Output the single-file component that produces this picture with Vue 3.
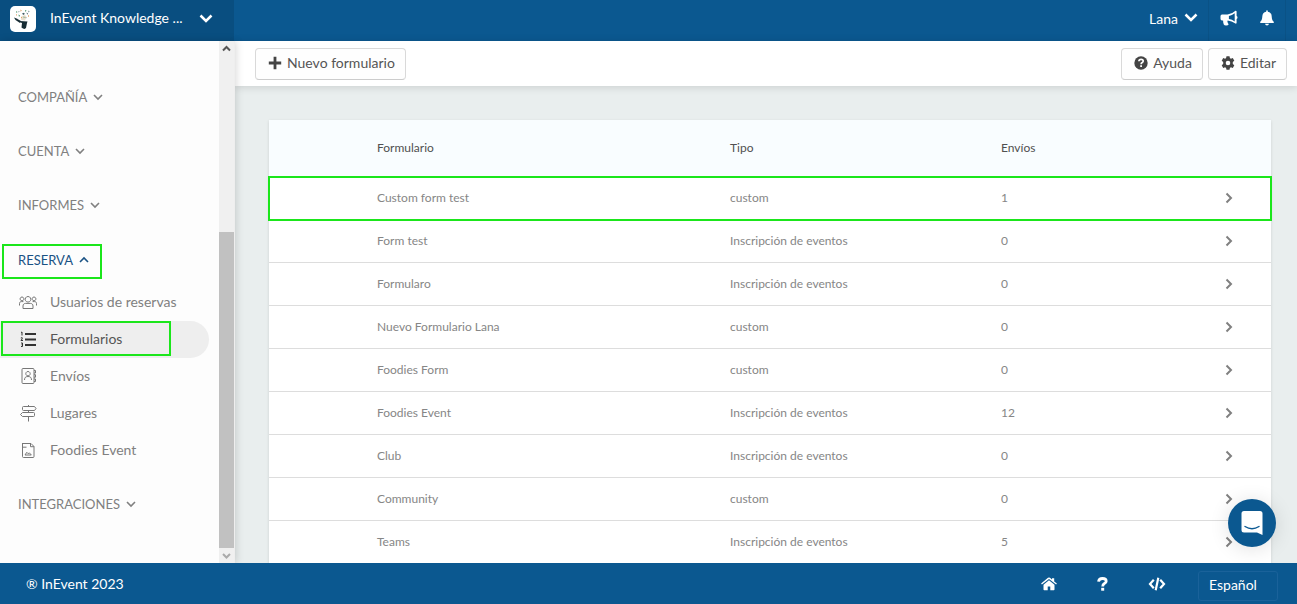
<script setup>
import { ref } from 'vue'

const language = ref('es')

const groups = [
  { title: 'COMPAÑÍA' },
  { title: 'CUENTA' },
  { title: 'INFORMES' },
  {
    title: 'RESERVA',
    open: true,
    items: [
      { label: 'Usuarios de reservas', icon: 'users' },
      { label: 'Formularios', icon: 'list', active: true },
      { label: 'Envíos', icon: 'contact' },
      { label: 'Lugares', icon: 'sign' },
      { label: 'Foodies Event', icon: 'file' },
    ],
  },
  { title: 'INTEGRACIONES' },
]

const rows = [
  { name: 'Custom form test', type: 'custom', count: 1, marked: true },
  { name: 'Form test', type: 'Inscripción de eventos', count: 0 },
  { name: 'Formularo', type: 'Inscripción de eventos', count: 0 },
  { name: 'Nuevo Formulario Lana', type: 'custom', count: 0 },
  { name: 'Foodies Form', type: 'custom', count: 0 },
  { name: 'Foodies Event', type: 'Inscripción de eventos', count: 12 },
  { name: 'Club', type: 'Inscripción de eventos', count: 0 },
  { name: 'Community', type: 'custom', count: 0 },
  { name: 'Teams', type: 'Inscripción de eventos', count: 5 },
]

const icons = {
  users:
    'M9 3.500a2.800 2.800 0 1 0 .01 0M3 4a1.900 1.900 0 1 0 .01 0M15 4a1.900 1.900 0 1 0 .01 0M4 15.500v-2.500c0-1.800 1.200-2.600 2.600-2.600h4.800c1.400 0 2.600.8 2.600 2.600v2.500zM.5 12.500v-2c0-1.200.7-1.900 1.900-1.900h2M17.500 12.500v-2c0-1.200-.7-1.900-1.900-1.900h-2',
  contact:
    'M4 1.500h10q1 0 1 1v13q0 1-1 1H4q-1 0-1-1v-13q0-1 1-1zM9 4.500a2.200 2.200 0 1 0 .01 0M5.500 13c0-2.500 1.200-3.500 3.500-3.500s3.500 1 3.500 3.500M15 3.500h1.500V6H15M15 7.700h1.500v2.500H15M15 12h1.500v2.500H15',
  sign:
    'M4.500 2.500H15.500l1.500 2L15.500 6.500H4.500q-1 0-1-1v-2q0-1 1-1zM14.500 8.500H3.500l-2 2 2 2h11q1 0 1-1v-2q0-1-1-1zM9.500 1v1.500M9.500 6.500v2M9.500 12.500V17.500',
  file:
    'M3.500 2.500h8.500l3 3V15.500q0 1-1 1H4.500q-1 0-1-1V2M11.500 2.500v3.200h3.500M3.500 6.200h4M6 14l1.800-2.700 1.500 1.500 1-1 2 2.200z',
}
</script>

<template>
  <div class="app">
    <header class="top">
      <button class="brand" type="button">
        <svg class="logo" viewBox="0 0 26 26" aria-hidden="true">
          <rect width="26" height="26" rx="5" fill="#fff" />
          <path d="M10 15l7.500.5-.5 1.500-1 5-1.500 1-1.500-.5-1.500-1 .5-4.500-2-.7z" fill="#172c34" />
          <path d="M4 11.500l2.500 1 4.500 2.500-1 2-4.500-3z" fill="#172c34" />
          <path d="M11 14l1-4 3-1 1.500 2-1.500 3.500z" fill="#eadfce" />
          <path d="M6 5l1.500 1-1 1zM8.500 8.500l1.500 1-1 1.500zM15 4l1.500.5-1 1.500zM13.500 10.500l1.200.5-.8 1.200z" fill="#3e8d61" />
          <path d="M10.500 3.500l1.200 1-1 1.200zM18 9l1.200 1-1.200 1zM6 8l1 1-1 .7zM11 10.500l1 1-1 1z" fill="#d9863d" />
          <path d="M12 7.500l2-.8.800 1.300-1.500 1zM16.500 6.500l1.500 1-.8 1.200zM18.500 4.500l1 1-1 1zM8.500 5l1 .5-.7 1zM15.500 11l1 .5-.5 1z" fill="#455e67" />
        </svg>
        <span class="brand-name">InEvent Knowledge ...</span>
        <svg class="chev-top" viewBox="0 0 14 10" aria-hidden="true"><path d="M1.500 1.500 7 7l5.500-5.500" /></svg>
      </button>
      <nav class="top-nav" aria-label="Usuario">
        <button class="user" type="button">
          Lana
          <svg class="chev-top" viewBox="0 0 14 10" aria-hidden="true"><path d="M1.500 1.500 7 7l5.500-5.500" /></svg>
        </button>
        <div class="top-icons">
          <button type="button" aria-label="Anuncios">
            <svg width="18" height="16" viewBox="0 0 18 16" fill="#fff" aria-hidden="true">
              <path fill-rule="evenodd" d="M15.500.8q1-.2 1.100.8v4.300q.9.400.9 1.500t-.9 1.500v3.900q-.1 1-1.100.8-3.900-3-7.800-3.200-.6.700-.1 1.900.1 1 1.100 1.900-.6 1.400-2.700 1.300-1.700-.1-2.200-.9-.8-2.400-.7-4.200H2Q.5 10.300.5 8.800V6.100Q.6 4.600 2 4.500h5.500Q12 4.200 15.500.8zM14.700 3.300Q12 5.600 8.900 6v2.900q3.100.3 5.800 2.600z" />
            </svg>
          </button>
          <button type="button" aria-label="Notificaciones">
            <svg width="14" height="16" viewBox="0 0 14 16" fill="#fff" aria-hidden="true">
              <path d="M6.200 1.700V1q0-.8.800-.8t.8.800v.7c2.500.4 3.800 2.200 3.900 4.700.1 2.800.8 4.300 2.100 5.400.2 1-.3 1.200-.9 1.200H1.100c-.6 0-1.100-.2-.9-1.200 1.300-1.100 2-2.600 2.100-5.400.1-2.500 1.400-4.300 3.900-4.700zM5 13.700h4q-.3 1.700-2 1.700t-2-1.700z" />
            </svg>
          </button>
        </div>
      </nav>
    </header>

    <div class="body">
      <aside class="side">
        <nav class="menu" aria-label="Principal">
          <section v-for="g in groups" :key="g.title" class="group">
            <button type="button" class="group-title" :class="{ open: g.open }" :aria-expanded="!!g.open">
              {{ g.title }}
              <svg class="chev-side" viewBox="0 0 10 8" aria-hidden="true">
                <path :d="g.open ? 'M1 6l4-4 4 4' : 'M1 2l4 4 4-4'" />
              </svg>
            </button>
            <ul v-if="g.items" class="items">
              <li v-for="item in g.items" :key="item.label">
                <a href="#" :class="{ active: item.active }">
                  <svg v-if="item.icon === 'list'" class="item-icon" viewBox="0 0 18 18" aria-hidden="true">
                    <path class="thick" d="M6 4h11M6 9.500h11M6 15h11" />
                    <path class="thin" d="M2 2.500l1-.5v3.500M1.800 8q2-1 1.500.7L2 10.500h2M2 13h1.500v3.500H2M2.500 14.800h1" />
                  </svg>
                  <svg v-else class="item-icon" viewBox="0 0 18 18" aria-hidden="true">
                    <path :d="icons[item.icon]" />
                  </svg>
                  {{ item.label }}
                </a>
              </li>
            </ul>
          </section>
        </nav>
        <div class="scroll" aria-hidden="true">
          <svg class="arrow up" viewBox="0 0 15 15"><path d="M4 9.500 7.500 6 11 9.500" /></svg>
          <div class="thumb"></div>
          <svg class="arrow down" viewBox="0 0 15 15"><path d="M4 6l3.500 3.500L11 6" /></svg>
        </div>
      </aside>

      <main class="main">
        <div class="toolbar">
          <button type="button" class="btn">
            <svg width="14" height="14" viewBox="0 0 14 14" aria-hidden="true">
              <path d="M5.600.800h2.800v4.800h4.800v2.800H8.400v4.800H5.600V8.400H.800V5.600h4.800z" fill="#444" />
            </svg>
            Nuevo formulario
          </button>
          <div class="actions">
            <button type="button" class="btn">
              <svg width="14" height="14" viewBox="0 0 14 14" aria-hidden="true">
                <circle cx="7" cy="7" r="6.700" fill="#444" />
                <path d="M4.900 5.300Q5 3.400 7.100 3.400t2.100 1.700q0 .9-1 1.500Q7.100 7.200 7.100 8.200" fill="none" stroke="#fff" stroke-width="1.700" />
                <path d="M6.200 9.200h1.800v1.700H6.200z" fill="#fff" />
              </svg>
              Ayuda
            </button>
            <button type="button" class="btn">
              <svg width="14" height="14" viewBox="0 0 14 14" aria-hidden="true">
                <path fill-rule="evenodd" fill="#444" d="M5.500.2h3l.4 1.900 1 .6 1.900-.6 1.500 2.600-1.500 1.300v2l1.500 1.300-1.500 2.600-1.900-.6-1 .6-.4 1.900h-3l-.4-1.900-1-.6-1.900.6L.7 9.300l1.500-1.300V6L.7 4.700l1.500-2.600 1.900.6 1-.6zM7 4.700a2.300 2.300 0 1 0 0 4.600 2.300 2.300 0 0 0 0-4.600z" />
              </svg>
              Editar
            </button>
          </div>
        </div>

        <div class="content">
          <table class="forms">
            <colgroup>
              <col class="c-lead" />
              <col class="c-name" />
              <col class="c-type" />
              <col class="c-count" />
              <col class="c-go" />
            </colgroup>
            <thead>
              <tr>
                <td></td>
                <th scope="col">Formulario</th>
                <th scope="col">Tipo</th>
                <th scope="col">Envíos</th>
                <td></td>
              </tr>
            </thead>
            <tbody>
              <tr v-for="r in rows" :key="r.name" :class="{ marked: r.marked }">
                <td></td>
                <td>{{ r.name }}</td>
                <td>{{ r.type }}</td>
                <td>{{ r.count }}</td>
                <td>
                  <svg class="go" viewBox="0 0 8 12" aria-hidden="true"><path d="M1.500 1.500 6 6l-4.500 4.500" /></svg>
                </td>
              </tr>
            </tbody>
          </table>
        </div>
      </main>
    </div>

    <footer class="foot">
      <span class="copy">® InEvent 2023</span>
      <nav class="foot-nav" aria-label="Pie">
        <a href="#" aria-label="Inicio">
          <svg width="16" height="14" viewBox="0 0 16 14" fill="#fff" aria-hidden="true">
            <path d="M8 3.200 13.500 7.800v4.700q0 .7-.7.7H9.300V9.500H6.700v3.700H3.200q-.7 0-.7-.7V7.800z" />
            <path d="M8 .5q.6 0 1 .3l2 1.700V1.200h2.200v3.200L15.900 6.600l-.8 1L8 1.900.9 7.600l-.8-1L7 .8q.4-.3 1-.3z" />
          </svg>
        </a>
        <a href="#" aria-label="Ayuda">
          <svg width="11" height="14" viewBox="0 0 11 14" aria-hidden="true">
            <path d="M1.500 4.600Q2 1.500 5.500 1.500q3.700 0 3.700 2.700 0 1.500-1.800 2.400Q5.700 7.500 5.700 9.400" fill="none" stroke="#fff" stroke-width="2.800" />
            <path d="M4.200 10.800h3v2.900h-3z" fill="#fff" />
          </svg>
        </a>
        <a href="#" aria-label="Desarrolladores">
          <svg width="18" height="14" viewBox="0 0 18 14" fill="none" stroke="#fff" stroke-width="2.200" aria-hidden="true">
            <path d="M5.800 2.800 2 7l3.800 4.200M12.200 2.800 16 7l-3.800 4.200M10.300.8 7.700 13.200" />
          </svg>
        </a>
        <select v-model="language" class="lang" aria-label="Idioma">
          <option value="es">Español</option>
        </select>
      </nav>
    </footer>

    <button type="button" class="chat" aria-label="Chat">
      <svg width="24" height="26" viewBox="0 0 24 26" aria-hidden="true">
        <path d="M4 1h16q2.500 0 2.500 2.500V25l-5.500-2.500H4Q1.500 22.500 1.500 20V3.500Q1.500 1 4 1z" fill="#fff" />
        <path d="M5 16.500q7 4.500 14 0" fill="none" stroke="#0c5a93" stroke-width="1.400" stroke-linecap="round" />
      </svg>
    </button>
  </div>
</template>

<style>
body {
  overflow: hidden;
}
</style>

<style scoped>
.app {
  display: flex;
  flex-direction: column;
  height: 100vh;
  font-family: Lato, 'Liberation Sans', sans-serif;
  font-size: 14px;
  color: #808080;
  background: #e9eeee;
}
.app * {
  box-sizing: border-box;
}
button,
select {
  font: inherit;
  color: inherit;
  background: none;
  border: 0;
  padding: 0;
  margin: 0;
}
a {
  color: inherit;
  text-decoration: none;
}
svg {
  display: block;
  flex: none;
}
.top {
  display: flex;
  justify-content: space-between;
  flex: none;
  height: 41px;
  background: #0b5890;
  color: #fff;
}
.brand {
  display: flex;
  align-items: center;
  width: 234px;
  padding: 0 10px 4px;
  background: #094e80;
}
.logo {
  width: 26px;
  height: 26px;
}
.brand-name {
  margin: 0 16px 2px 14px;
  white-space: nowrap;
}
.chev-top {
  width: 14px;
  height: 10px;
  fill: none;
  stroke: #fff;
  stroke-width: 2.500;
}
.top-nav {
  display: flex;
  padding-right: 11px;
}
.user {
  display: flex;
  align-items: center;
  gap: 6px;
  padding: 0 10px 5px 0;
}
.top-icons {
  display: flex;
  align-items: center;
  gap: 22px;
  padding: 0 11px 6px 11px;
  border-left: 1px solid #0a5286;
  border-right: 1px solid #0a5286;
}
.body {
  display: flex;
  flex: 1;
  min-height: 0;
}
.side {
  position: relative;
  z-index: 1;
  display: flex;
  flex: none;
  width: 235px;
  background: #fdfdfd;
  border-right: 1px solid #eee;
  box-shadow: 1px 0 8px rgba(0, 0, 0, 0.16);
}
.menu {
  display: flex;
  flex: 1;
  flex-direction: column;
  gap: 16px;
  padding: 37px 10px 0 2px;
  overflow: hidden;
}
.group {
  display: flex;
  flex-direction: column;
  align-items: flex-start;
}
.group-title {
  display: flex;
  align-items: center;
  gap: 6px;
  height: 38px;
  padding: 0 16px;
  font-size: 13px;
}
.group-title.open {
  height: 35px;
  margin: 4px 0 5px;
  padding: 0 11px 4px 14px;
  color: #1a5284;
  border: 2px solid #1be61b;
}
.chev-side {
  width: 10px;
  height: 8px;
  fill: none;
  stroke: currentColor;
  stroke-width: 1.600;
}
.items {
  align-self: stretch;
  margin: 0 0 0 -2px;
  padding: 0;
  list-style: none;
}
.items a {
  position: relative;
  display: flex;
  align-items: center;
  gap: 13px;
  height: 37px;
  padding: 0 0 2px 19px;
  border-radius: 0 19px 19px 0;
}
.items a.active {
  color: #555;
  background: #eee;
}
.items a.active::after {
  content: '';
  position: absolute;
  inset: 0 38px 2px 1px;
  border: 2px solid #1be61b;
}
.item-icon {
  width: 18px;
  height: 18px;
  fill: none;
  stroke: #777;
  stroke-width: 1;
}
.active .item-icon {
  stroke: #333;
}
.thick {
  stroke-width: 1.800;
}
.scroll {
  display: flex;
  flex-direction: column;
  width: 15px;
  background: #f0f0f0;
}
.arrow {
  width: 15px;
  height: 15px;
  fill: none;
  stroke-width: 2;
}
.up {
  stroke: #555;
}
.down {
  stroke: #aaa;
}
.thumb {
  flex: 1;
  margin-top: 176px;
  background: #c1c1c1;
}
.main {
  display: flex;
  flex: 1;
  flex-direction: column;
  min-width: 0;
}
.toolbar {
  position: relative;
  display: flex;
  align-items: center;
  justify-content: space-between;
  flex: none;
  height: 45px;
  padding: 0 10px 0 20px;
  background: #fff;
  box-shadow: 0 1px 8px rgba(0, 0, 0, 0.14);
}
.actions {
  display: flex;
  gap: 5px;
}
.btn {
  display: flex;
  align-items: center;
  gap: 5px;
  height: 32px;
  padding: 0 10px 2px 12px;
  color: #555;
  background: #fefefe;
  border: 1px solid #d9d9d9;
  border-bottom-color: #ccc;
  border-radius: 4px;
}
.content {
  flex: 1;
  min-height: 0;
  padding: 34px 26px 0 34px;
  overflow: hidden;
}
.forms {
  width: 100%;
  table-layout: fixed;
  border-collapse: separate;
  border-spacing: 0;
  font-size: 12px;
  color: #868686;
  background: #fff;
  box-shadow: 0 1px 3px rgba(0, 0, 0, 0.12);
}
.c-lead {
  width: 108px;
}
.c-name {
  width: 353px;
}
.c-type {
  width: 271px;
}
.c-go {
  width: 46px;
}
th,
td {
  height: 43px;
  padding: 0 0 1px;
  text-align: left;
  border-bottom: 1px solid #ddd;
}
thead th,
thead td {
  height: 57px;
  padding: 0 0 2px;
  font-weight: 400;
  color: #505050;
  background: #f9fdff;
  border: 0;
}
.marked {
  outline: 2px solid #1be61b;
  outline-offset: -1px;
}
.go {
  width: 8px;
  height: 12px;
  fill: none;
  stroke: #808080;
  stroke-width: 2;
}
.foot {
  position: relative;
  z-index: 2;
  display: flex;
  align-items: center;
  justify-content: space-between;
  flex: none;
  height: 41px;
  padding: 0 19px 0 26px;
  color: #fff;
  background: #0b5890;
}
.foot-nav {
  display: flex;
  align-items: center;
  gap: 40px;
}
.lang {
  width: 80px;
  height: 30px;
  margin: 4px 0 0 -8px;
  padding: 0 10px 2px;
  appearance: none;
  border: 1px solid #1a629a;
  border-radius: 3px;
}
.lang option {
  color: #333;
}
.chat {
  position: fixed;
  right: 21px;
  bottom: 57px;
  z-index: 3;
  display: flex;
  align-items: center;
  justify-content: center;
  width: 48px;
  height: 48px;
  border-radius: 50%;
  background: #0b5890;
  box-shadow: 0 2px 20px rgba(0, 0, 0, 0.12);
}
</style>
